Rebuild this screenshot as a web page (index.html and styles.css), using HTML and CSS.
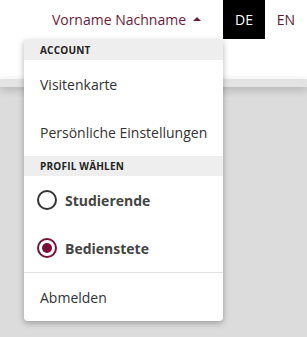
FILE: index.html
```html
<!DOCTYPE html>
<html lang="de">
<head>
    <meta charset="UTF-8">
    <meta name="viewport" content="width=device-width, initial-scale=1.0">
    <title>Profil</title>
    <link rel="stylesheet" href="styles.css">
</head>
<body>

    <header class="header">
        <nav class="topnav">
            <div class="user-menu">
                <button class="user-toggle">
                    Vorname Nachname
                    <span class="caret"></span>
                </button>

                <div class="dropdown">
                    <div class="dropdown-heading">Account</div>
                    <a class="dropdown-item" href="#">Visitenkarte</a>
                    <a class="dropdown-item" href="#">Persönliche Einstellungen</a>

                    <div class="dropdown-heading">Profil wählen</div>
                    <label class="dropdown-item radio-item">
                        <span class="radio"></span>
                        Studierende
                    </label>
                    <label class="dropdown-item radio-item">
                        <span class="radio checked"></span>
                        Bedienstete
                    </label>

                    <div class="divider"></div>
                    <a class="dropdown-item" href="#">Abmelden</a>
                </div>
            </div>

            <a class="lang active" href="#">DE</a>
            <a class="lang" href="#">EN</a>
        </nav>
    </header>
    <div class="subbar"></div>

</body>
</html>
```

FILE: styles.css
```css
* {
    margin: 0;
    padding: 0;
    box-sizing: border-box;
}

body {
    width: 100vw;
    height: 100vh;
    background-color: #dcdcdc;
    font-family: "Open Sans", "Noto Sans", sans-serif;
    overflow: hidden;
}

.header {
    height: 79px;
    background-color: white;
}

.subbar {
    height: 8px;
    background-color: #e3e3e3;
    box-shadow: 0 3px 8px rgba(0, 0, 0, 0.2);
}

.topnav {
    display: flex;
    justify-content: flex-end;
    height: 39px;
}

.user-menu {
    position: relative;
}

.user-toggle {
    display: flex;
    align-items: center;
    gap: 7px;
    height: 39px;
    padding: 0 22px 0 0;
    border: none;
    background: none;
    color: #6b1b3c;
    font-family: inherit;
    font-size: 14px;
    white-space: nowrap;
}

.caret {
    width: 0;
    height: 0;
    border-left: 4px solid transparent;
    border-right: 4px solid transparent;
    border-bottom: 4px solid #6b1b3c;
    margin-top: -2px;
}

.lang {
    display: flex;
    align-items: center;
    justify-content: center;
    width: 42px;
    height: 39px;
    color: #5e1a33;
    font-size: 14px;
    text-decoration: none;
}

.lang.active {
    background-color: black;
    color: white;
}

.dropdown {
    position: absolute;
    top: 40px;
    right: 0;
    width: 199px;
    background-color: white;
    border-radius: 0 0 4px 4px;
    box-shadow: 0 2px 6px rgba(0, 0, 0, 0.3);
    z-index: 2;
}

.dropdown-heading {
    height: 20px;
    padding: 0 16px;
    background-color: #eeeeee;
    color: #222;
    font-size: 10px;
    font-weight: 700;
    letter-spacing: 0.2px;
    line-height: 20px;
    text-transform: uppercase;
}

.dropdown-item {
    display: flex;
    align-items: center;
    height: 48px;
    padding: 0 16px;
    color: #333;
    font-size: 14px;
    text-decoration: none;
    white-space: nowrap;
}

.radio-item {
    gap: 8px;
    padding-left: 13px;
    color: #444;
    font-weight: 700;
}

.radio {
    display: flex;
    align-items: center;
    justify-content: center;
    width: 20px;
    height: 20px;
    border: 2px solid #333;
    border-radius: 50%;
}

.radio.checked {
    border-color: #7a0f38;
}

.radio.checked::after {
    content: "";
    width: 10px;
    height: 10px;
    border-radius: 50%;
    background-color: #7a0f38;
}

.divider {
    height: 1px;
    background-color: #e0e0e0;
}
```
